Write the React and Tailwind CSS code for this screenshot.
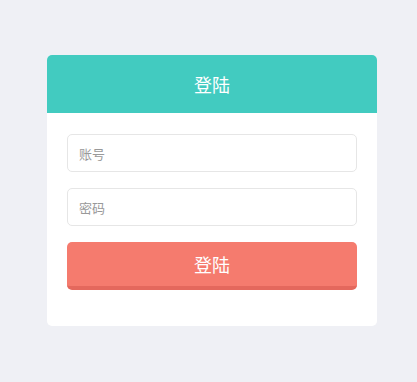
export default function App() {
  return (
    <div
      className="flex h-[382px] items-center justify-center bg-[#eff0f5] pb-px pl-[7px]"
      style={{ fontFamily: '"Microsoft YaHei", "Noto Sans CJK SC", sans-serif' }}
    >
      <div className="w-[330px] overflow-hidden rounded-[5px] bg-white">
        {/* Header */}
        <div className="flex h-[58px] items-center justify-center bg-[#42cbc0] text-[18px] text-white">
          登陆
        </div>

        {/* Form */}
        <div className="flex flex-col px-5 pt-[21px] pb-[36px]">
          <input
            type="text"
            placeholder="账号"
            className="h-[38px] rounded-[5px] border border-[#e6e6e6] px-[11px] text-[13px] text-[#666] placeholder:text-[#999] outline-none"
          />
          <input
            type="password"
            placeholder="密码"
            className="mt-4 h-[38px] rounded-[5px] border border-[#e6e6e6] px-[11px] text-[13px] text-[#666] placeholder:text-[#999] outline-none"
          />
          <button className="mt-4 h-[48px] rounded-[5px] border-b-[4px] border-[#e4685d] bg-[#f57b6e] pt-[1px] text-[18px] text-white">
            登陆
          </button>
        </div>
      </div>
    </div>
  );
}
